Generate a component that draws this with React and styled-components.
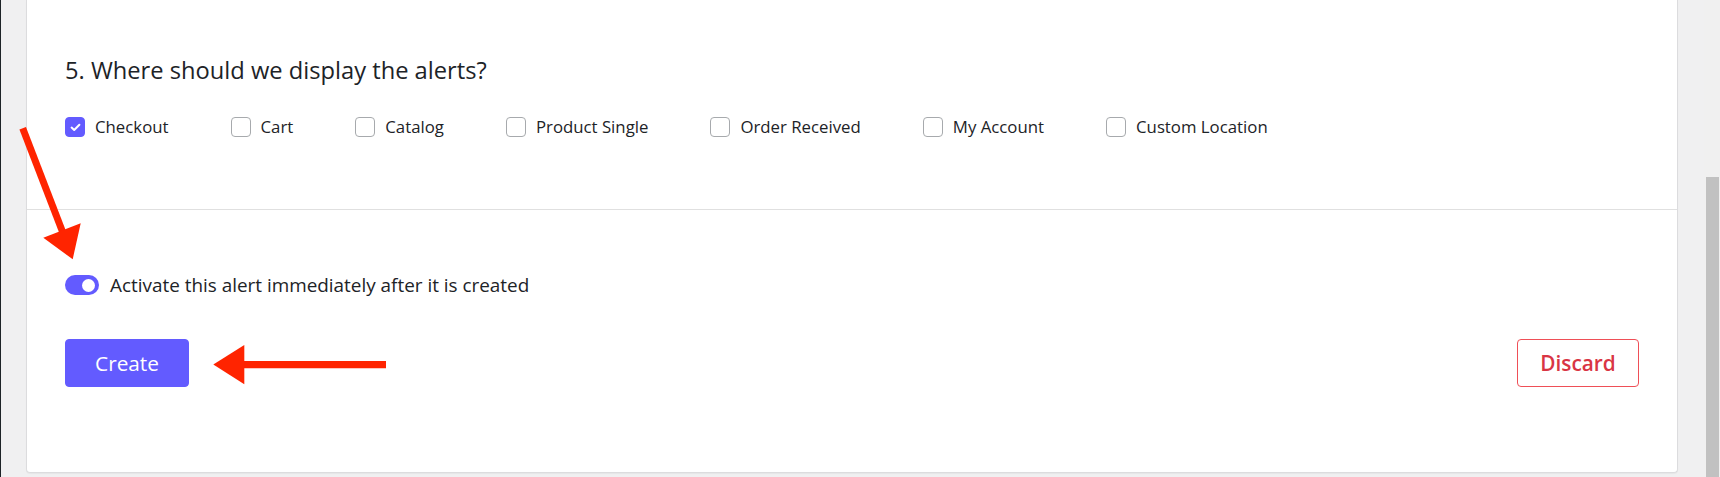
import React from "react";
import styled, { createGlobalStyle } from "styled-components";

const Global = createGlobalStyle`
  html, body { margin: 0; padding: 0; }
  body {
    font-family: "Segoe UI", "Open Sans", "Noto Sans", sans-serif;
    color: #1d2327;
    overflow: hidden;
  }
  * { box-sizing: border-box; }
`;

const Page = styled.div`
  position: relative;
  display: flex;
  height: 477px;
  background: #f0f0f1;
  overflow: hidden;
`;

const AdminEdge = styled.div`
  width: 1px;
  flex: none;
  background: #1d2327;
`;

const Main = styled.div`
  flex: 1;
  display: flex;
  flex-direction: column;
  padding: 0 26px 4px 25px;
`;

const Card = styled.div`
  flex: 1;
  display: flex;
  flex-direction: column;
  background: #fff;
  border: 1px solid #dcdcde;
  border-top: none;
  border-radius: 0 0 4px 4px;
  box-shadow: 0 1px 1px rgba(0, 0, 0, 0.04);
`;

const Section = styled.div`
  padding: ${(p) => p.$pad};
  height: ${(p) => p.$height || "auto"};
  border-bottom: ${(p) => (p.$divider ? "1px solid #e0e0e0" : "none")};
  flex: ${(p) => (p.$grow ? 1 : "none")};
`;

const Heading = styled.h2`
  margin: 0;
  font-size: 23.7px;
  line-height: 32px;
  font-weight: 400;
  color: #1d2327;
`;

const OptionRow = styled.div`
  display: flex;
  align-items: center;
  gap: 62px;
  height: 24px;
  margin-top: 29px;
`;

const Option = styled.label`
  display: flex;
  align-items: center;
  gap: 10px;
  font-size: 16.8px;
  line-height: 24px;
  color: #1d2327;
  cursor: pointer;
`;

const Box = styled.span`
  width: 20px;
  height: 20px;
  flex: none;
  border-radius: 4px;
  display: flex;
  align-items: center;
  justify-content: center;
  background: ${(p) => (p.$checked ? "#635bff" : "#fff")};
  border: 1px solid ${(p) => (p.$checked ? "#635bff" : "#a7aaad")};
`;

const ToggleRow = styled.div`
  display: flex;
  align-items: center;
  gap: 11px;
  height: 24px;
  font-size: 18.9px;
  color: #1d2327;
`;

const Toggle = styled.span`
  width: 34px;
  height: 20px;
  border-radius: 10px;
  background: #635bff;
  display: flex;
  align-items: center;
  justify-content: flex-end;
  padding: 0 4px;
  flex: none;
`;

const Knob = styled.span`
  width: 13px;
  height: 13px;
  border-radius: 50%;
  background: #fff;
`;

const ButtonRow = styled.div`
  display: flex;
  justify-content: space-between;
  align-items: center;
  margin-top: 42px;
`;

const Button = styled.button`
  height: 48px;
  width: ${(p) => p.$width};
  border-radius: 4px;
  font-family: inherit;
  font-size: 20.8px;
  font-weight: ${(p) => (p.$danger ? 600 : 400)};
  cursor: pointer;
  background: ${(p) => (p.$danger ? "#fff" : "#635bff")};
  color: ${(p) => (p.$danger ? "#d93544" : "#fff")};
  border: 1px solid ${(p) => (p.$danger ? "#ef4f57" : "#635bff")};
  padding: 0;
`;

const ScrollTrack = styled.div`
  width: 16px;
  flex: none;
  display: flex;
  flex-direction: column;
  padding: 177px 1px 0 2px;
  background: #f0f0f0;
`;

const ScrollThumb = styled.div`
  flex: 1;
  background: #c1c1c1;
`;

const Annotations = styled.svg`
  position: absolute;
  left: 0;
  top: 0;
  width: 1720px;
  height: 477px;
  pointer-events: none;
`;

const options = [
  { label: "Checkout", checked: true },
  { label: "Cart" },
  { label: "Catalog" },
  { label: "Product Single" },
  { label: "Order Received" },
  { label: "My Account" },
  { label: "Custom Location" },
];

const Check = () => (
  <svg width="11" height="9" viewBox="0 0 11 9">
    <polyline
      points="1.6,4.6 4.2,7 9.4,1.8"
      fill="none"
      stroke="#fff"
      strokeWidth="2"
      strokeLinecap="round"
      strokeLinejoin="round"
    />
  </svg>
);

export default function App() {
  return (
    <>
      <Global />
      <Page>
        <AdminEdge />
        <Main>
          <Card>
            <Section $pad="54px 38px 0" $height="210px" $divider>
              <Heading>5. Where should we display the alerts?</Heading>
              <OptionRow>
                {options.map((o) => (
                  <Option key={o.label}>
                    <Box $checked={o.checked}>{o.checked && <Check />}</Box>
                    {o.label}
                  </Option>
                ))}
              </OptionRow>
            </Section>
            <Section $pad="63px 38px 0" $grow>
              <ToggleRow>
                <Toggle>
                  <Knob />
                </Toggle>
                Activate this alert immediately after it is created
              </ToggleRow>
              <ButtonRow>
                <Button $width="124px">Create</Button>
                <Button $width="122px" $danger>
                  Discard
                </Button>
              </ButtonRow>
            </Section>
          </Card>
        </Main>
        <ScrollTrack>
          <ScrollThumb />
        </ScrollTrack>
        <Annotations viewBox="0 0 1720 477">
          <line x1="22.7" y1="128.3" x2="63" y2="233" stroke="#ff2400" strokeWidth="7" />
          <polygon points="43.3,237.7 80.7,223.3 72.7,259.3" fill="#ff2400" />
          <line x1="386" y1="364.6" x2="242" y2="364.6" stroke="#ff2400" strokeWidth="7.3" />
          <polygon points="244.3,345 244.3,384.3 213.3,364.6" fill="#ff2400" />
        </Annotations>
      </Page>
    </>
  );
}
